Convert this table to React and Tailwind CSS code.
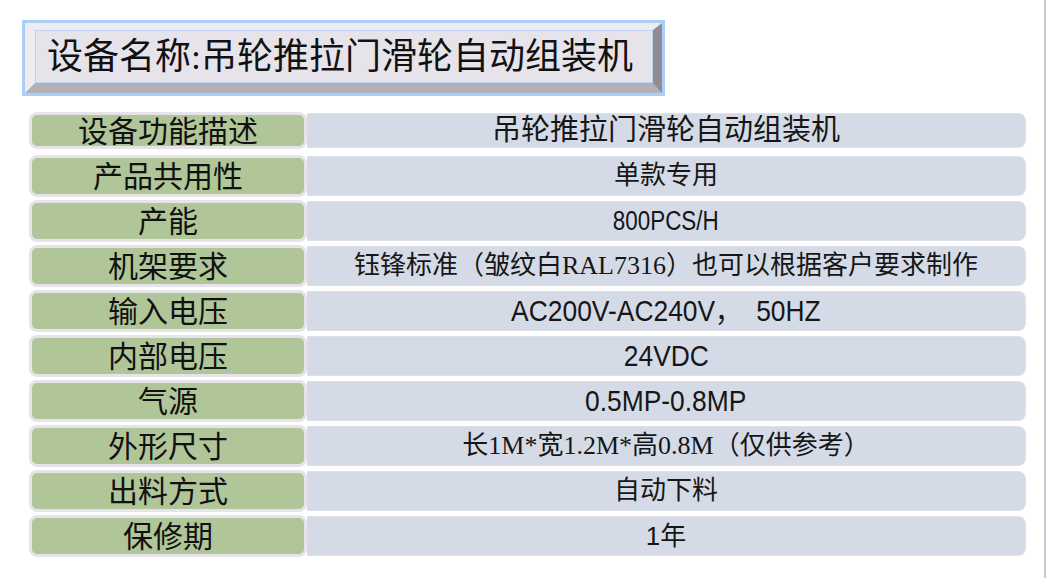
const rows = [
  { label: '设备功能描述', value: '吊轮推拉门滑轮自动组装机', kind: 'cjk', size: 'text-[29px]' },
  { label: '产品共用性', value: '单款专用', kind: 'cjk', size: 'text-[26px]' },
  { label: '产能', value: '800PCS/H', kind: 'latin', size: 'text-[27px] scale-x-[0.83]' },
  { label: '机架要求', value: '钰锋标准（皱纹白RAL7316）也可以根据客户要求制作', kind: 'cjk', size: 'text-[26px]' },
  { label: '输入电压', value: 'AC200V-AC240V，  50HZ', kind: 'latin', size: 'text-[30px] scale-x-[0.88]' },
  { label: '内部电压', value: '24VDC', kind: 'latin', size: 'text-[30px] scale-x-[0.88]' },
  { label: '气源', value: '0.5MP-0.8MP', kind: 'latin', size: 'text-[30px] scale-x-[0.88]' },
  { label: '外形尺寸', value: '长1M*宽1.2M*高0.8M（仅供参考）', kind: 'cjk', size: 'text-[26px]' },
  { label: '出料方式', value: '自动下料', kind: 'cjk', size: 'text-[26px]' },
  { label: '保修期', value: '1年', kind: 'mixed', size: 'text-[26px]' },
];

const serifCjk = "font-['Liberation_Serif','Noto_Sans_CJK_SC',serif]";
const sans = "font-['Liberation_Sans','Noto_Sans_CJK_SC',sans-serif]";

function Row({ row, first }) {
  let valueClass = `${serifCjk} ${row.size}`;
  if (row.kind === 'latin') valueClass = `${sans} ${row.size} inline-block whitespace-pre`;
  if (row.kind === 'mixed') valueClass = `${sans} ${row.size}`;

  return (
    <div className={`flex ${first ? 'h-[37px]' : 'h-[42px]'}`}>
      <div className="w-[278px] shrink-0 rounded-lg border-[3px] border-[#e7e3eb] bg-[#b1c698] flex items-center justify-center">
        <span className={`${serifCjk} text-[30px] leading-none text-[#111] pt-[2px]`}>{row.label}</span>
      </div>
      <div className="flex-1 my-[1px] rounded-r-lg border border-l-0 border-[#dde1ea] bg-[#d5dbe6] flex items-center justify-center">
        <span className={`${valueClass} leading-none text-[#161616]`}>{row.value}</span>
      </div>
    </div>
  );
}

export default function App() {
  return (
    <div className="w-[1049px] h-[578px] bg-white flex overflow-hidden">
      <div className="w-[1044px] shrink-0 pt-[20px]">
        <div className="ml-[22px] w-[643px] h-[76px] border-[3px] border-[#a9cff6]">
          <div className="h-full border-l-[10px] border-t-[7px] border-r-[9px] border-b-[10px] border-l-[#eeebf1] border-t-[#eeebf1] border-r-[#8f8c93] border-b-[#b4b0b8]">
            <div className="h-full border border-[#b9d5f2] bg-[#e7e3eb] flex items-center pl-[11px]">
              <span className={`${serifCjk} text-[36px] leading-none text-[#111]`}>设备名称:吊轮推拉门滑轮自动组装机</span>
            </div>
          </div>
        </div>

        <div className="ml-[29px] w-[997px] mt-[16px] flex flex-col gap-[3px]">
          {rows.map((row, i) => (
            <div key={row.label} className={i === 0 ? 'mb-[3px]' : ''}>
              <Row row={row} first={i === 0} />
            </div>
          ))}
        </div>
      </div>
      <div className="w-[2px] h-full bg-[#c9c9c9]" />
    </div>
  );
}
